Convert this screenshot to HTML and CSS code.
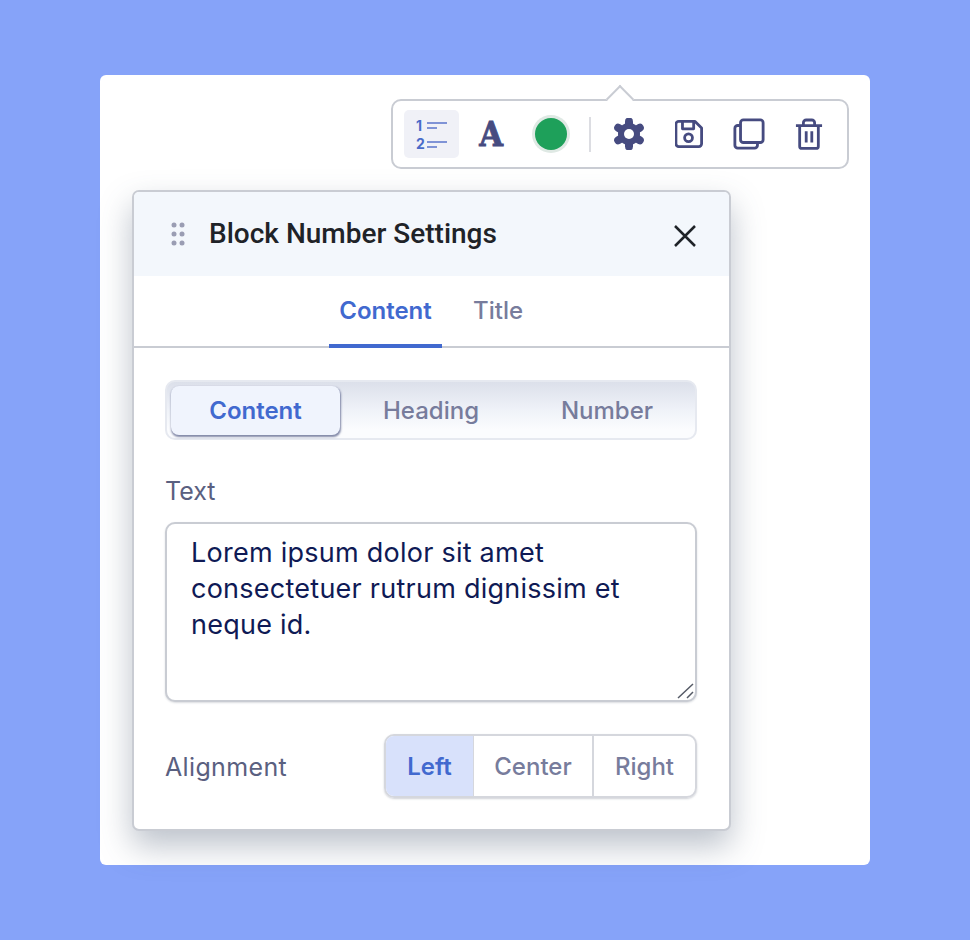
FILE: index.html
```html
<!DOCTYPE html>
<html lang="en">
<head>
    <meta charset="UTF-8">
    <meta name="viewport" content="width=device-width, initial-scale=1.0">
    <title>Block Number Settings</title>
    <link rel="stylesheet" href="styles.css">
</head>
<body>
    <div class="card">
        <div class="toolbar">
            <span class="toolbar-arrow"></span>
            <button class="tool tool-list">
                <svg width="34" height="40" viewBox="0 0 34 40">
                    <text x="0" y="16" class="list-num">1</text>
                    <text x="0" y="34" class="list-num">2</text>
                    <path d="M11 8h20M11 13h10M11 27h20M11 32h10" class="list-lines"/>
                </svg>
            </button>
            <span class="tool-letter">A</span>
            <span class="tool-color"></span>
            <span class="toolbar-sep"></span>
            <svg class="icon-gear" width="32" height="32" viewBox="0 0 32 32">
                <g class="gear-teeth">
                    <path d="M16 3.500v25"/>
                    <path d="M16 3.500v25" transform="rotate(60 16 16)"/>
                    <path d="M16 3.500v25" transform="rotate(120 16 16)"/>
                </g>
                <circle cx="16" cy="16" r="11" class="gear-body"/>
                <circle cx="16" cy="16" r="5" class="gear-hole"/>
            </svg>
            <svg class="icon icon-save" width="28" height="28" viewBox="0 0 30 30">
                <path d="M4 1.500h17.500l7 7V25.500a3 3 0 0 1-3 3H4a3 3 0 0 1-3-3V4.500a3 3 0 0 1 3-3z"/>
                <path d="M8 1.500v8h12v-8"/>
                <circle cx="14.500" cy="19" r="4.200"/>
            </svg>
            <svg class="icon icon-copy" width="32" height="32" viewBox="0 0 34 34">
                <rect x="8" y="2" width="24" height="24" rx="3"/>
                <path d="M8 8H5a3 3 0 0 0-3 3v18a3 3 0 0 0 3 3h18a3 3 0 0 0 3-3v-3"/>
            </svg>
            <svg class="icon icon-trash" width="28" height="32" viewBox="0 0 30 34">
                <path d="M1 8h28M5 8v22a2.500 2.500 0 0 0 2.500 2.500h15A2.500 2.500 0 0 0 25 30V8"/>
                <path d="M9 8V5a3 3 0 0 1 3-3h6a3 3 0 0 1 3 3v3"/>
                <path d="M12 14v12M18 14v12"/>
            </svg>
        </div>

        <div class="panel">
            <div class="panel-header">
                <svg class="drag-handle" width="14" height="26" viewBox="0 0 14 26">
                    <circle cx="3" cy="4" r="2.500"/><circle cx="11" cy="4" r="2.500"/>
                    <circle cx="3" cy="13" r="2.500"/><circle cx="11" cy="13" r="2.500"/>
                    <circle cx="3" cy="22" r="2.500"/><circle cx="11" cy="22" r="2.500"/>
                </svg>
                <h2 class="panel-title">Block Number Settings</h2>
                <svg class="panel-close" width="24" height="24" viewBox="0 0 24 24">
                    <path d="M2 2l20 20M22 2L2 22"/>
                </svg>
            </div>

            <div class="tabs">
                <div class="tab tab-active">Content</div>
                <div class="tab">Title</div>
            </div>

            <div class="panel-body">
                <div class="segmented">
                    <div class="seg-item seg-active">Content</div>
                    <div class="seg-item">Heading</div>
                    <div class="seg-item">Number</div>
                </div>

                <label class="field-label">Text</label>
                <div class="text-wrap">
                    <textarea class="text-input">Lorem ipsum dolor sit amet consectetuer rutrum dignissim et neque id.</textarea>
                    <svg class="resize-grip" width="17" height="16" viewBox="0 0 17 16">
                        <path d="M1 15L16 1M10 15l6-6"/>
                    </svg>
                </div>

                <div class="align-row">
                    <span class="align-label">Alignment</span>
                    <div class="button-group">
                        <div class="group-btn group-btn-left group-active">Left</div>
                        <div class="group-btn group-btn-center">Center</div>
                        <div class="group-btn group-btn-right">Right</div>
                    </div>
                </div>
            </div>
        </div>
    </div>
</body>
</html>
```

FILE: styles.css
```css
* {
    box-sizing: border-box;
}
body {
    margin: 0;
    height: 940px;
    padding: 75px 100px;
    background: #86a3f9;
    font-family: Inter, "Liberation Sans", sans-serif;
}
.card {
    height: 790px;
    background: white;
    border-radius: 6px;
    padding-top: 24px;
    display: flex;
    flex-direction: column;
}

/* toolbar */
.toolbar {
    position: relative;
    align-self: flex-end;
    width: 458px;
    height: 70px;
    margin-right: 21px;
    padding-left: 11px;
    border: 2px solid #c9ccd3;
    border-radius: 10px;
    background: white;
    display: flex;
    align-items: center;
}
.toolbar-arrow {
    position: absolute;
    top: -12px;
    left: 217px;
    width: 20px;
    height: 20px;
    background: white;
    border-top: 2px solid #c9ccd3;
    border-left: 2px solid #c9ccd3;
    transform: rotate(45deg);
}
.tool {
    padding: 0;
    border: none;
    background: none;
}
.tool-list {
    width: 55px;
    height: 48px;
    padding: 4px 0 0 12px;
    background: #f0f1f7;
    border-radius: 5px;
    text-align: left;
}
.list-num {
    font-family: Inter, sans-serif;
    font-size: 14px;
    font-weight: 700;
    fill: #4a6bc9;
}
.list-lines {
    fill: none;
    stroke: #7f93d6;
    stroke-width: 2;
}
.tool-letter {
    width: 26px;
    margin-left: 19px;
    font-family: "DejaVu Serif", serif;
    font-size: 34px;
    font-stretch: condensed;
    font-weight: 700;
    line-height: 40px;
    color: #464b80;
    text-align: center;
    -webkit-text-stroke: 0.8px #464b80;
}
.tool-color {
    width: 32px;
    height: 32px;
    margin-left: 31px;
    border-radius: 50%;
    background: #1ea05a;
    box-shadow: 0 0 0 3px #dfe9e4;
}
.toolbar-sep {
    width: 2px;
    height: 35px;
    margin-left: 22px;
    background: #dcdde2;
}
.icon-gear {
    margin-left: 22px;
}
.gear-teeth path {
    fill: none;
    stroke: #464b80;
    stroke-width: 8;
    stroke-linecap: round;
}
.gear-body {
    fill: #464b80;
}
.gear-hole {
    fill: white;
}
.icon {
    fill: none;
    stroke: #464b80;
    stroke-width: 3;
    stroke-linejoin: round;
}
.icon-save {
    margin-left: 30px;
}
.icon-copy {
    margin-left: 30px;
}
.icon-trash {
    margin-left: 30px;
}

/* settings panel */
.panel {
    width: 599px;
    height: 641px;
    margin: 21px 0 0 32px;
    border: 2px solid #c9ccd3;
    border-radius: 7px;
    background: white;
    box-shadow: 0 15px 32px rgba(70, 85, 110, 0.36);
    overflow: hidden;
}
.panel-header {
    height: 84px;
    padding: 0 32px 0 37px;
    background: #f3f7fc;
    display: flex;
    align-items: center;
}
.drag-handle {
    fill: #9a9db3;
}
.panel-title {
    flex: 1;
    margin: 0 0 2px 24px;
    font-family: Roboto, sans-serif;
    font-size: 28px;
    font-weight: 500;
    color: #1f2328;
}
.panel-close {
    margin-top: 3px;
    fill: none;
    stroke: #1f2328;
    stroke-width: 2.500;
}
.tabs {
    height: 72px;
    border-bottom: 2px solid #c9ccd3;
    padding-left: 195px;
    display: flex;
    gap: 10px;
}
.tab {
    height: 72px;
    padding: 0 10px 0 21px;
    font-size: 24px;
    font-weight: 500;
    line-height: 70px;
    color: #777c9c;
}
.tab-active {
    width: 113px;
    padding: 0;
    text-align: center;
    font-weight: 600;
    color: #4169cf;
    border-bottom: 4px solid #4169cf;
}
.panel-body {
    padding: 32px 32px 0 31px;
}
.segmented {
    height: 60px;
    border: 2px solid #e6e9f0;
    border-radius: 10px;
    background: linear-gradient(#dce0ea, #eff2f8 50%, #fbfcfe 85%);
    display: grid;
    grid-template-columns: repeat(3, 1fr);
}
.seg-item {
    font-size: 24px;
    font-weight: 500;
    line-height: 58px;
    text-align: center;
    color: #777c9c;
}
.seg-active {
    height: 49px;
    margin: 4px 3px 0 4px;
    line-height: 49px;
    font-weight: 600;
    color: #4169cf;
    background: #f0f4fd;
    border-radius: 8px;
    box-shadow: 0.5px 1.5px 2px rgba(50, 60, 110, 0.6);
}
.field-label {
    display: block;
    margin-top: 36px;
    font-size: 25px;
    line-height: 30px;
    color: #5a6080;
}
.text-wrap {
    position: relative;
    margin-top: 16px;
}
.text-input {
    display: block;
    width: 100%;
    height: 180px;
    padding: 11px 24px;
    border: 2px solid #c9ccd3;
    border-radius: 10px;
    font-family: Inter, sans-serif;
    font-size: 27px;
    letter-spacing: 0.25px;
    line-height: 36px;
    color: #0f1a55;
    background: white;
    box-shadow: 0 1px 2px rgba(70, 80, 100, 0.2);
    resize: none;
    outline: none;
}
.resize-grip {
    position: absolute;
    right: 3px;
    bottom: 3px;
    fill: none;
    stroke: #555a66;
    stroke-width: 1.500;
}
.align-row {
    height: 64px;
    margin-top: 32px;
    display: flex;
    align-items: center;
    justify-content: space-between;
}
.align-label {
    padding-top: 2px;
    font-size: 25px;
    letter-spacing: 0.35px;
    color: #5a6080;
}
.button-group {
    width: 313px;
    height: 64px;
    border: 2px solid #d5d7dd;
    border-radius: 10px;
    box-shadow: 0 1px 2px rgba(70, 80, 100, 0.25);
    overflow: hidden;
    display: flex;
}
.group-btn {
    font-size: 24px;
    font-weight: 500;
    line-height: 62px;
    text-align: center;
    color: #777c9c;
}
.group-btn-left {
    width: 87px;
}
.group-btn-center {
    width: 121px;
    border-left: 1px solid #d5d7dd;
    border-right: 2px solid #d5d7dd;
}
.group-btn-right {
    flex: 1;
}
.group-active {
    font-weight: 600;
    color: #4169cf;
    background: #d8e1fb;
}
```
